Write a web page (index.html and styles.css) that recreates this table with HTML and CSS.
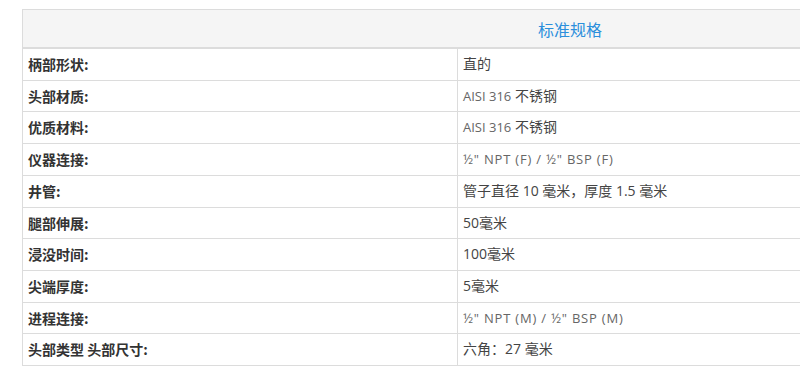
FILE: index.html
```html
<!DOCTYPE html>
<html lang="zh">
<head>
<meta charset="utf-8">
<link rel="stylesheet" href="styles.css">
</head>
<body>
<div class="wrap">
<table class="spec">
<colgroup><col class="col-label"><col class="col-value"></colgroup>
<thead>
<tr><th colspan="2" class="title">标准规格</th></tr>
</thead>
<tbody>
<tr><td class="label">柄部形状:</td><td class="value">直的</td></tr>
<tr><td class="label">头部材质:</td><td class="value"><span class="en">AISI 316</span> 不锈钢</td></tr>
<tr><td class="label">优质材料:</td><td class="value"><span class="en">AISI 316</span> 不锈钢</td></tr>
<tr><td class="label">仪器连接:</td><td class="value"><span class="en npt">½" NPT (F) / ½" BSP (F)</span></td></tr>
<tr><td class="label">井管:</td><td class="value">管子直径 10 毫米，厚度 1.5 毫米</td></tr>
<tr><td class="label">腿部伸展:</td><td class="value">50毫米</td></tr>
<tr><td class="label">浸没时间:</td><td class="value">100毫米</td></tr>
<tr><td class="label">尖端厚度:</td><td class="value">5毫米</td></tr>
<tr><td class="label">进程连接:</td><td class="value"><span class="en npt">½" NPT (M) / ½" BSP (M)</span></td></tr>
<tr><td class="label">头部类型 头部尺寸:</td><td class="value">六角：27 毫米</td></tr>
</tbody>
</table>
</div>
</body>
</html>
```

FILE: styles.css
```css
html, body {
  margin: 0;
  padding: 0;
  background: #fff;
  overflow: hidden;
}
.wrap {
  padding: 9px 0 0 22px;
  overflow: hidden;
  width: 778px;
}
.spec {
  border-collapse: collapse;
  width: 1096px;
  table-layout: fixed;
  font-family: "Open Sans", "Noto Sans CJK SC", sans-serif;
  font-size: 14px;
  color: #333;
}
.col-label {
  width: 435px;
}
.spec th.title {
  background: #f5f5f5;
  color: #2b8fdc;
  font-weight: normal;
  font-size: 16px;
  font-family: "Noto Sans CJK SC", sans-serif;
  height: 37px;
  padding: 0;
  text-align: center;
  border: 1px solid #dcdcdc;
  border-bottom: 2px solid #dcdcdc;
  line-height: 20px;
}
.spec td {
  border: 1px solid #dcdcdc;
  padding: 5px 5px;
  line-height: 20.7px;
  vertical-align: middle;
}
.spec td.label {
  font-weight: bold;
  font-family: "Noto Sans CJK SC", sans-serif;
  color: #333;
}
.spec td.value {
  color: #444;
}
.spec .en {
  font-size: 13px;
  color: #666;
}
.spec .npt {
  letter-spacing: 0.8px;
}
```
